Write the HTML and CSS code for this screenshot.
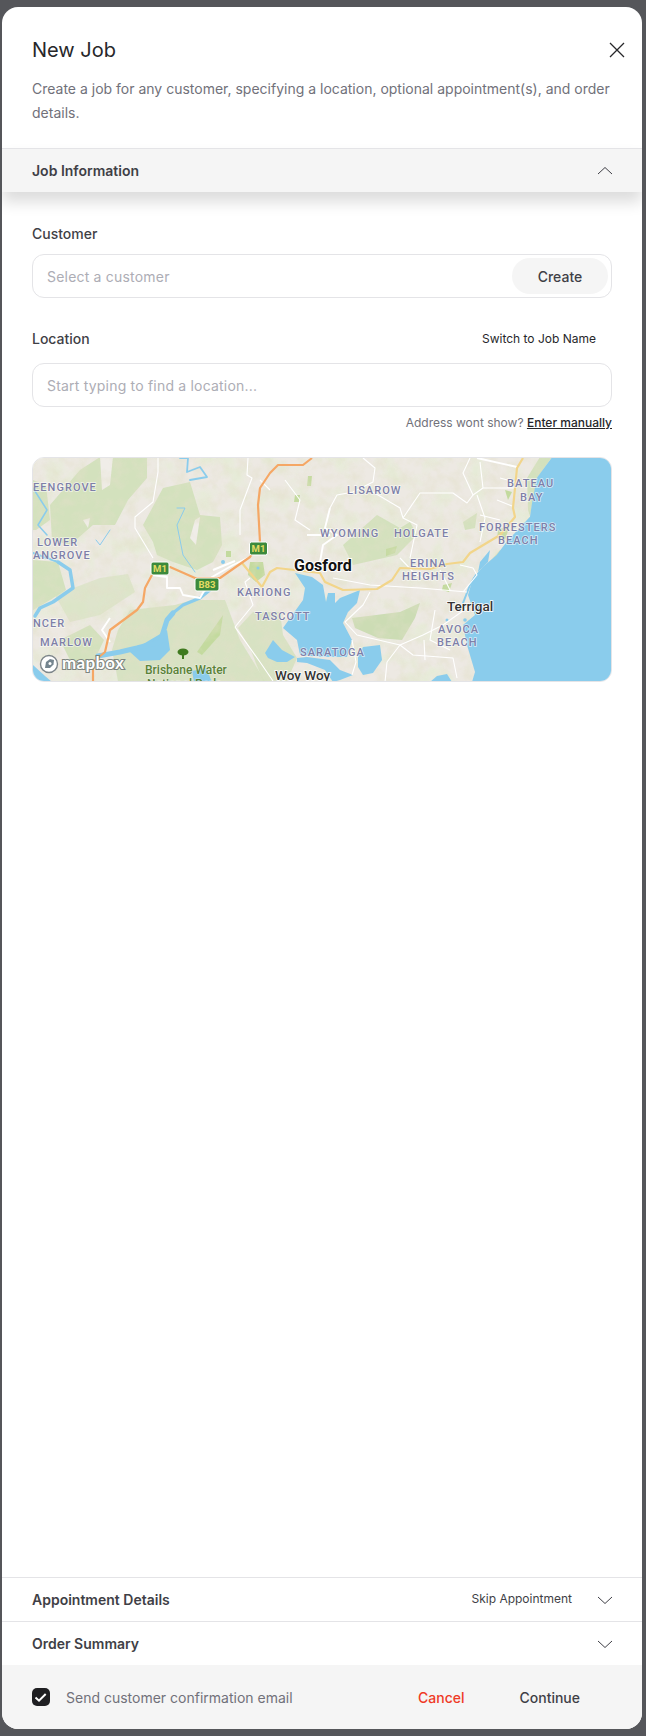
FILE: index.html
```html
<!DOCTYPE html>
<html lang="en">
<head>
<meta charset="utf-8">
<title>New Job</title>
<link rel="stylesheet" href="styles.css">
</head>
<body>
<div class="modal">
  <header class="head">
    <div class="head-row">
      <h1 class="title">New Job</h1>
      <svg class="close" viewBox="0 0 16 16"><path d="M1 1 15 15M15 1 1 15"/></svg>
    </div>
    <p class="desc">Create a job for any customer, specifying a location, optional appointment(s), and order details.</p>
  </header>
  <div class="section open">
    <span class="section-title">Job Information</span>
    <svg class="chev" viewBox="0 0 16 10"><path d="M1 8 8 1.500 15 8"/></svg>
  </div>
  <main class="body">
    <label class="label">Customer</label>
    <div class="field">
      <span class="ph">Select a customer</span>
      <span class="create">Create</span>
    </div>
    <div class="loc-row">
      <label class="label">Location</label>
      <span class="switch">Switch to Job Name</span>
    </div>
    <div class="field">
      <span class="ph">Start typing to find a location...</span>
    </div>
    <p class="hint">Address wont show? <a class="manual">Enter manually</a></p>
    <div class="map">
      <svg viewBox="33 458 578 223" class="map-svg">
        <defs>
          <filter id="mottle" x="0" y="0" width="100%" height="100%">
            <feTurbulence type="fractalNoise" baseFrequency="0.08" numOctaves="3" seed="7"/>
            <feColorMatrix type="matrix" values="0 0 0 0 0.76  0 0 0 0 0.74  0 0 0 0 0.58  1.8 0 0 0 -0.7"/>
          </filter>
          <filter id="blotch" x="0" y="0" width="100%" height="100%">
            <feTurbulence type="fractalNoise" baseFrequency="0.045" numOctaves="3" seed="21"/>
            <feColorMatrix type="matrix" values="0 0 0 0 0.76  0 0 0 0 0.85  0 0 0 0 0.63  0 3.2 0 0 -1.45"/>
          </filter>
          <filter id="soft"><feGaussianBlur stdDeviation="0.35"/></filter>
        </defs>
        <g filter="url(#soft)">
          <rect x="33" y="458" width="578" height="223" fill="#ede9e3"/>
          <rect x="33" y="458" width="578" height="223" filter="url(#blotch)" opacity=".55"/>
          <g fill="#d3e1bd">
            <path d="M80 470 100 457H147V478L128 500 115 525 93 525 70 545 52 540 50 505z"/>
            <path d="M143 525 163 488 190 482 200 515 220 517 222 545 213 562 197 570 173 562 157 555 153 542z"/>
            <path d="M33 480 46 485 50 520 36 530 33 530z"/>
            <path d="M33 560 58 562 66 590 50 600 33 610z"/>
            <path d="M130 610 175 605 192 600 225 600 240 640 265 681H118L112 650 118 630z" opacity=".85"/>
            <path d="M238 628 253 612 280 612 283 635 297 658 287 681H263L250 648z" opacity=".85"/>
            <path d="M343 545 377 515 400 528 410 522 417 535 397 555 353 565z"/>
            <path d="M463 522 477 513 475 528 465 530z"/>
            <path d="M552 457H540L527 478 528 510 530 516 537 478z"/>
            <path d="M55 595 100 578 128 574 135 592 100 615 70 622z" opacity=".6"/>
            <path d="M60 640 90 625 104 640 92 665 70 660z"/>
            <path d="M510 555 500 550 486 566 474 580z"/>
          </g>
          <path d="M352 618 400 612 420 603 415 618 402 640 378 638 355 628z" fill="#ccdcb4"/>
          <g fill="#c3da9e">
            <path d="M197 652 223 615 220 635 202 655z"/>
            <path d="M250 562 263 562 265 575 256 582 248 575z"/>
            <path d="M308 476 312 476 311 486 307 486z"/>
            <path d="M226 551 231 551 231 557 226 557z"/>
            <path d="M295 495 300 495 299 502 294 502z"/>
            <path d="M443 585 452 583 449 592 442 590z"/>
            <path d="M386 549 397 546 395 553 386 556z"/>
            <path d="M498 530 510 525 505 540 497 538z"/>
            <path d="M505 490 512 492 508 500z"/>
          </g>
          <g fill="#f0ede8">
            <path d="M100 457H113L110 485 102 490z"/>
            <path d="M195 520 200 517 196 545 190 538z"/>
            <path d="M83 520 90 518 88 528z"/>
          </g>
          <rect x="33" y="458" width="578" height="223" filter="url(#mottle)" opacity=".6"/>
          <g fill="#8accec">
            <path d="M551.700 457.700 536.700 478 531.700 505 530 516.700 506.700 541.700 496.700 555 483 566.700 473 578 468 595 475 615 463 625 467 645 475 672 472 682H612V457z"/>
            <path d="M295 573 312 577 323 585 326 602 328 593 335 593 335 603 340 598 360 590 357 603 348 612 343 623 352 640 347 657 323 657 300 655 297 640 283 628 303 600 305 588z"/>
            <path d="M265 653 273 640 282 650 295 657 287 662 277 662 268 658z"/>
            <path d="M297 658 307 657 330 660 340 670 353 675 340 680 333 682 325 670 307 663 297 662z"/>
            <path d="M358 657 363 647 380 645 382 660 373 673 363 675 358 667z"/>
            <path d="M430 682 437 676 447 674 452 682z"/>
            <path d="M33 665 45 676 52 682H33z"/>
            <path d="M480 562 490 550 488 562 478 572z"/>
            <path d="M192 671 206 668 212 682H194z"/>
            <path d="M130 652 150 640 167 630 170 650 160 660 140 661z"/>
          </g>
          <g fill="none" stroke="#8accec" stroke-linejoin="round" stroke-linecap="round">
            <path stroke-width="3.500" d="M58 562 70 570 73 588 63 595 53 602 40 608 35 616"/>
            <path stroke-width="2" d="M33 553 58 562"/>
            <path stroke-width="1.500" d="M33 488 47 510 38 525 47 535"/>
            <path stroke-width="1" d="M110 530 100 545 96 540"/>
            <path stroke-width="5" d="M98 656 120 652 137 648 160 642 167 620 173 613"/>
            <path stroke-width="3" d="M173 613 183 605 200 598 210 590"/>
            <path stroke-width="1.800" d="M180 458 188 458 187 472 200 467 207 477 190 480"/>
            <path stroke-width="1" d="M177 508 185 508 177 525 183 555 195 572"/>
            <path stroke-width="2" d="M463 603 470 585 476 575"/>
          </g>
          <g fill="#8accec">
            <circle cx="223" cy="562" r="2"/>
            <circle cx="258" cy="568" r="1.500"/>
            <circle cx="465" cy="620" r="1.800"/>
            <circle cx="447" cy="620" r="1.500"/>
          </g>
          <g fill="none" stroke="#fff" stroke-width="1.100" stroke-linejoin="round">
            <path d="M248 458 247 475 252 478 240 510 240 535"/>
            <path d="M158 458 158 472 153 502 135 517 135 528 153 558"/>
            <path d="M235 627 253 605 245 582 250 578"/>
            <path d="M235 627 260 662 273 681"/>
            <path d="M363 458 375 468 373 482 353 492 337 495 330 508"/>
            <path d="M373 492 400 508 403 518 420 493 453 493 467 503 473 495 463 473 470 458"/>
            <path d="M403 518 417 525 410 558"/>
            <path d="M480 462 483 488 516 488M483 488 473 495M477 495 485 518 480 542"/>
            <path d="M333 578 370 585 420 588 467 592"/>
            <path d="M370 592 363 605 345 622 357 635 400 645 423 635 443 625 467 608"/>
            <path d="M387 662 400 645 413 655 453 658 457 678"/>
            <path d="M387 662 385 682"/>
            <path d="M460 565 473 568 477 575 463 592"/>
            <path d="M400 558 416 575 430 580M440 570 450 590"/>
            <path d="M500 478 515 482M497 500 512 506M480 515 500 520"/>
            <path d="M352 640 356 662 352 675"/>
            <path d="M424 640 425 660M435 610 430 640 450 650"/>
            <path d="M260 480 270 490M285 480 300 500 295 520 310 530"/>
          </g>
          <g fill="none" stroke="#fff" stroke-width="1.900" stroke-linejoin="round">
            <path d="M152 575 167 577 167 588 180 588 183 595 200 598 212 577 233 565 250 557"/>
            <path d="M110 618 102 630 110 642"/>
            <path d="M330 508 325 528 337 535 323 545 320 562"/>
            <path d="M307 535 330 535"/>
            <path d="M477 458 517 467"/>
            <path d="M213 570 235 561"/>
          </g>
          <g fill="none" stroke="#f2d58a" stroke-width="2.200" stroke-linejoin="round">
            <path d="M523 458 517 468 513 508 515 517 500 535 470 553 463 562 447 564 430 569 400 568 392 580 377 589 343 590 325 582 320 573 303 571 277 568 270 572 262 587 242 563"/>
          </g>
          <g fill="none" stroke="#f5a765" stroke-width="2.200" stroke-linejoin="round">
            <path d="M312 458 303 465 278 465 270 473 260 488 258 505 260 542 250 557 220 578 195 578 170 567 153 573 145 588 143 602 137 610 110 630 105 652 93 662 93 681"/>
          </g>
        </g>
        <g class="shield">
          <rect x="249.500" y="542" width="18" height="13" rx="2"/>
          <text x="258.500" y="552">M1</text>
          <rect x="151" y="562" width="18" height="13" rx="2"/>
          <text x="160" y="572">M1</text>
          <rect x="195" y="578" width="24" height="13" rx="2"/>
          <text x="207" y="588">B83</text>
        </g>
        <g class="place">
          <text x="33" y="491">EENGROVE</text>
          <text x="37" y="546">LOWER</text>
          <text x="33" y="559">ANGROVE</text>
          <text x="33" y="627">NCER</text>
          <text x="40" y="646">MARLOW</text>
          <text x="237" y="596">KARIONG</text>
          <text x="255" y="620">TASCOTT</text>
          <text x="347" y="494">LISAROW</text>
          <text x="320" y="537">WYOMING</text>
          <text x="394" y="537">HOLGATE</text>
          <text x="410" y="567">ERINA</text>
          <text x="402" y="580">HEIGHTS</text>
          <text x="507" y="487">BATEAU</text>
          <text x="520" y="501">BAY</text>
          <text x="479" y="531">FORRESTERS</text>
          <text x="498" y="544">BEACH</text>
          <text x="438" y="633">AVOCA</text>
          <text x="437" y="646">BEACH</text>
          <text x="300" y="656">SARATOGA</text>
        </g>
        <text x="294" y="571" class="city">Gosford</text>
        <text x="447" y="611" class="town">Terrigal</text>
        <text x="275" y="680" class="town">Woy Woy</text>
        <g fill="#3f7a1f">
          <ellipse cx="183" cy="652" rx="5.500" ry="3.500"/>
          <rect x="182" y="654" width="2" height="5"/>
        </g>
        <text x="145" y="674" class="park">Brisbane Water</text>
        <text x="147" y="688" class="park">National Park</text>
        <circle cx="49" cy="664" r="8.500" fill="#fff" stroke="#7d858a" stroke-width="1.400"/>
        <path d="M45 668 46 662 50 659 54 660 53.500 664.500 50 668z" fill="#75858f"/>
        <circle cx="50" cy="663.500" r="1.500" fill="#fff"/>
        <text x="62" y="669" class="mapbox">mapbox</text>
      </svg>
    </div>
  </main>
  <div class="section">
    <span class="section-title">Appointment Details</span>
    <span class="skip">Skip Appointment</span>
    <svg class="chev" viewBox="0 0 16 10"><path d="M1 2 8 8.500 15 2"/></svg>
  </div>
  <div class="section">
    <span class="section-title">Order Summary</span>
    <svg class="chev" viewBox="0 0 16 10"><path d="M1 2 8 8.500 15 2"/></svg>
  </div>
  <footer class="foot">
    <span class="check"><svg viewBox="0 0 18 18"><path d="M3.500 9.500 7 12.700 13.700 6"/></svg></span>
    <span class="confirm">Send customer confirmation email</span>
    <span class="cancel">Cancel</span>
    <span class="continue">Continue</span>
  </footer>
</div>
</body>
</html>
```
FILE: styles.css
```css
* { box-sizing: border-box; }
html, body { margin: 0; padding: 0; }
body {
  width: 646px;
  height: 1736px;
  background: #55565a;
  padding: 7px 4px 7px 2px;
  font-family: "Inter", "Liberation Sans", sans-serif;
  color: #27272a;
}
.modal {
  height: 1722px;
  background: #fff;
  border-radius: 16px;
  overflow: hidden;
  display: flex;
  flex-direction: column;
}
.head { padding: 31px 15px 23px 30px; height: 141px; }
.head-row { display: flex; justify-content: space-between; align-items: center; height: 24px; padding-right: 2px; }
.title { margin: 0; font-size: 20px; font-weight: 400; line-height: 24px; color: #27272a; }
.close { width: 16px; height: 16px; fill: none; stroke: #27272a; stroke-width: 1.3; }
.desc { margin: 15px 0 0; font-size: 14px; line-height: 24px; color: #71717a; }
.section {
  flex: none;
  height: 44px;
  border-top: 1px solid #e4e4e7;
  padding: 0 30px;
  display: flex;
  align-items: center;
}
.section.open { background: #f5f5f5; box-shadow: 0 10px 15px rgba(0,0,0,.14); position: relative; }
.section-title { font-size: 14px; font-weight: 600; color: #3f3f46; flex: 1; }
.chev { width: 16px; height: 10px; fill: none; stroke: #3f3f46; stroke-width: 1; margin-right: -1px; }
.skip { font-size: 12px; color: #3f3f46; margin: 0 25px 2px 0; }
.body { flex: 1; padding: 32px 30px 0; }
.label { display: block; font-size: 14px; font-weight: 500; line-height: 20px; color: #3f3f46; margin-bottom: 10px; }
.field {
  height: 44px;
  border: 1px solid #e4e4e7;
  border-radius: 12px;
  display: flex;
  align-items: center;
  justify-content: space-between;
  padding: 0 3px 0 14px;
}
.ph { font-size: 14px; color: #adadb5; letter-spacing: .2px; }
.create { width: 96px; height: 36px; border-radius: 18px; background: #f5f5f5; font-size: 14px; font-weight: 500; color: #3f3f46; display: flex; align-items: center; justify-content: center; }
.loc-row { display: flex; justify-content: space-between; align-items: center; margin-top: 31px; height: 20px; margin-bottom: 14px; }
.loc-row .label { margin: 0; }
.switch { font-size: 12px; color: #27272a; margin: 0 16px 2px 0; }
.hint { margin: 8px 0 0; text-align: right; font-size: 12px; line-height: 16px; color: #71717a; }
.manual { color: #27272a; font-weight: 500; text-decoration: underline; }
.map { margin-top: 26px; height: 225px; border: 1px solid #e4e4e7; border-radius: 12px; overflow: hidden; }
.map-svg { display: block; width: 100%; height: 100%; }
.shield rect { fill: #3c8a3c; stroke: #fff; stroke-width: 1; }
.shield text { font: 700 9.500px "Roboto", sans-serif; fill: #e4dc64; text-anchor: middle; }
.place text { font: 500 11px "Roboto", sans-serif; letter-spacing: 1.050px; fill: #7e7fa8; paint-order: stroke; stroke: rgba(255,255,255,.65); stroke-width: 1.500px; }
.city { font: 700 16px "Roboto", sans-serif; fill: #111; paint-order: stroke; stroke: #fff; stroke-width: 2px; }
.town { font: 500 13.500px "Roboto", sans-serif; fill: #333; paint-order: stroke; stroke: #fff; stroke-width: 1.500px; }
.park { font: 500 12px "Roboto", sans-serif; fill: #5a8238; paint-order: stroke; stroke: rgba(255,255,255,.5); stroke-width: 1px; }
.mapbox { font: 700 17px "Lato", sans-serif; letter-spacing: .3px; fill: #fff; paint-order: stroke; stroke: #7d857f; stroke-width: 2.200px; }
.foot {
  flex: none;
  height: 64px;
  background: #f5f5f5;
  padding: 0 62px 0 30px;
  display: flex;
  align-items: center;
}
.check { width: 18px; height: 18px; border-radius: 5px; background: #1f1f22; }
.check svg { display: block; fill: none; stroke: #fff; stroke-width: 2; }
.confirm { margin-left: 16px; flex: 1; font-size: 14px; color: #71717a; }
.cancel { font-size: 14px; font-weight: 500; color: #ef3a26; margin-right: 55px; }
.continue { font-size: 14px; font-weight: 500; color: #3f3f46; }
```
